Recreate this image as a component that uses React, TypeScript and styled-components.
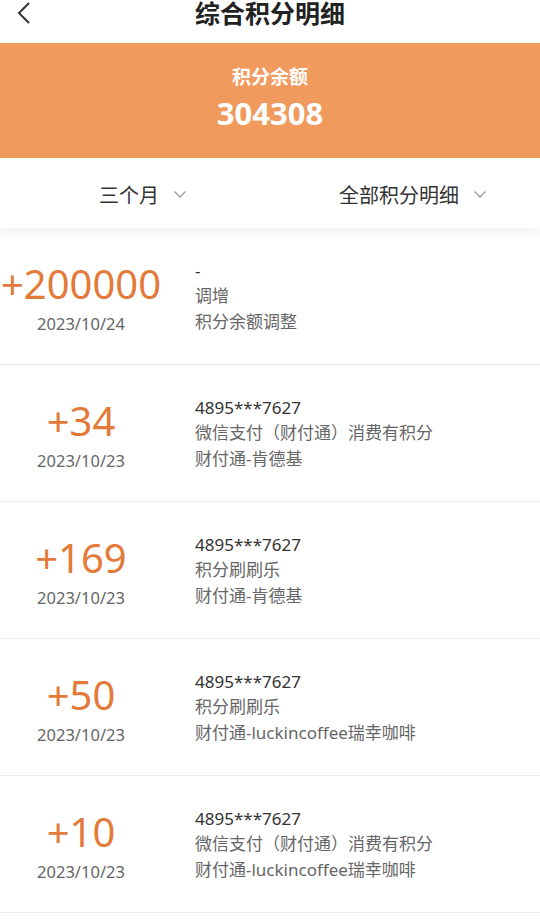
import styled, { createGlobalStyle } from "styled-components"

const GlobalStyle = createGlobalStyle`
    html, body {
        margin: 0;
        padding: 0;
        background: #fff;
        overflow: hidden;
    }
    body {
        font-family: "Noto Sans", "Noto Sans CJK SC", sans-serif;
        color: #333;
    }
`

type Record = {
    amount: string
    date: string
    lines: string[]
}

const records: Record[] = [
    { amount: "+200000", date: "2023/10/24", lines: ["-", "调增", "积分余额调整"] },
    { amount: "+34", date: "2023/10/23", lines: ["4895***7627", "微信支付（财付通）消费有积分", "财付通-肯德基"] },
    { amount: "+169", date: "2023/10/23", lines: ["4895***7627", "积分刷刷乐", "财付通-肯德基"] },
    { amount: "+50", date: "2023/10/23", lines: ["4895***7627", "积分刷刷乐", "财付通-luckincoffee瑞幸咖啡"] },
    { amount: "+10", date: "2023/10/23", lines: ["4895***7627", "微信支付（财付通）消费有积分", "财付通-luckincoffee瑞幸咖啡"] },
]

const Chevron = () => (
    <svg width="14" height="9" viewBox="0 0 14 9">
        <path d="M1.5 1.5 L7 7 L12.5 1.5" fill="none" stroke="#999" strokeWidth="1.3" />
    </svg>
)

const App = () => {
    return (
        <Page>
            <GlobalStyle />
            <Header>
                <BackButton>
                    <svg width="16" height="24" viewBox="0 0 16 24">
                        <path d="M13 2 L3 12 L13 22" fill="none" stroke="#333" strokeWidth="2" />
                    </svg>
                </BackButton>
                <Title>综合积分明细</Title>
            </Header>
            <Banner>
                <BannerLabel>积分余额</BannerLabel>
                <BannerValue>304308</BannerValue>
            </Banner>
            <FilterBar>
                <Filter>
                    <span>三个月</span>
                    <Chevron />
                </Filter>
                <Filter>
                    <span>全部积分明细</span>
                    <Chevron />
                </Filter>
            </FilterBar>
            <List>
                {records.map((r, i) => (
                    <Row key={i}>
                        <AmountCol>
                            <Amount>{r.amount}</Amount>
                            <DateText>{r.date}</DateText>
                        </AmountCol>
                        <Details>
                            {r.lines.map((l, j) => (
                                <Line key={j} $primary={j === 0}>{l}</Line>
                            ))}
                        </Details>
                    </Row>
                ))}
            </List>
        </Page>
    )
}

export default App

const Page = styled.div`
    width: 540px;
    height: 924px;
    overflow: hidden;
`

const Header = styled.div`
    position: relative;
    height: 43px;
    display: flex;
    justify-content: center;
    align-items: flex-start;
`

const BackButton = styled.div`
    position: absolute;
    left: 16px;
    top: 1px;
    display: flex;
`

const Title = styled.h1`
    margin: 0;
    font-size: 25px;
    line-height: 26px;
    font-weight: 700;
    color: #222;
`

const Banner = styled.div`
    height: 115px;
    background: #f09a5e;
    display: flex;
    flex-direction: column;
    align-items: center;
    justify-content: center;
    color: #fff;
    padding-bottom: 4px;
    box-sizing: border-box;
`

const BannerLabel = styled.div`
    font-size: 19px;
    font-weight: 700;
    line-height: 28px;
`

const BannerValue = styled.div`
    font-size: 31px;
    font-weight: 700;
    line-height: 44px;
`

const FilterBar = styled.div`
    height: 70px;
    display: grid;
    grid-template-columns: 1fr 1fr;
    align-items: center;
    background: #fff;
    box-shadow: 0 6px 10px rgba(0, 0, 0, 0.05);
    position: relative;
    z-index: 1;
    padding-top: 2px;
    box-sizing: border-box;
`

const Filter = styled.div`
    display: flex;
    align-items: center;
    justify-content: center;
    gap: 14px;
    font-size: 20px;
    color: #333;
    padding-left: 16px;
`

const List = styled.div`
    display: flex;
    flex-direction: column;
`

const Row = styled.div`
    height: 136px;
    display: flex;
    align-items: center;
    border-bottom: 1px solid #ececec;
    flex-shrink: 0;
`

const AmountCol = styled.div`
    width: 162px;
    display: flex;
    flex-direction: column;
    align-items: center;
    padding-top: 10px;
`

const Amount = styled.div`
    font-size: 40px;
    line-height: 46px;
    color: #e37a39;
`

const DateText = styled.div`
    font-size: 16.5px;
    line-height: 34px;
    color: #666;
`

const Details = styled.div`
    margin-left: 33px;
    display: flex;
    flex-direction: column;
`

const Line = styled.div<{ $primary: boolean }>`
    font-size: 17px;
    line-height: 25.5px;
    color: ${p => (p.$primary ? "#333" : "#666")};
`
